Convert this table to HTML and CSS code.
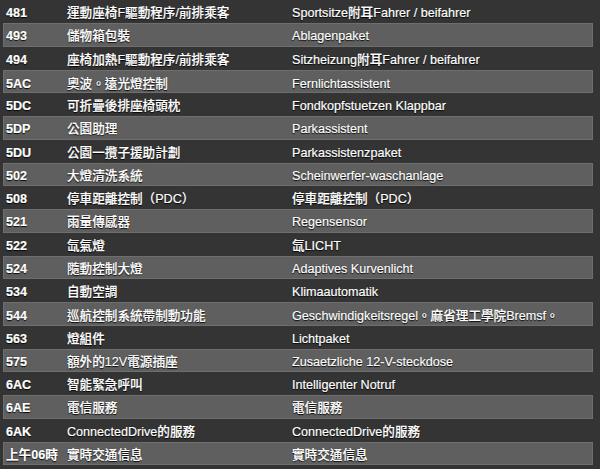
FILE: index.html
```html
<!DOCTYPE html>
<html lang="zh-Hant">
<head>
<meta charset="utf-8">
<link rel="stylesheet" href="styles.css">
</head>
<body>
<div class="list">
  <div class="row"><span class="code">481</span><span class="zh">運動座椅F驅動程序/前排乘客</span><span class="de">Sportsitze附耳Fahrer / beifahrer</span></div>
  <div class="row alt"><span class="code">493</span><span class="zh">儲物箱包裝</span><span class="de">Ablagenpaket</span></div>
  <div class="row"><span class="code">494</span><span class="zh">座椅加熱F驅動程序/前排乘客</span><span class="de">Sitzheizung附耳Fahrer / beifahrer</span></div>
  <div class="row alt"><span class="code">5AC</span><span class="zh">奧波<i class="p">。</i>遠光燈控制</span><span class="de">Fernlichtassistent</span></div>
  <div class="row"><span class="code">5DC</span><span class="zh">可折疊後排座椅頭枕</span><span class="de">Fondkopfstuetzen Klappbar</span></div>
  <div class="row alt"><span class="code">5DP</span><span class="zh">公園助理</span><span class="de">Parkassistent</span></div>
  <div class="row"><span class="code">5DU</span><span class="zh">公園一攬子援助計劃</span><span class="de">Parkassistenzpaket</span></div>
  <div class="row alt"><span class="code">502</span><span class="zh">大燈清洗系統</span><span class="de">Scheinwerfer-waschanlage</span></div>
  <div class="row"><span class="code">508</span><span class="zh">停車距離控制（PDC）</span><span class="de">停車距離控制（PDC）</span></div>
  <div class="row alt"><span class="code">521</span><span class="zh">雨量傳感器</span><span class="de">Regensensor</span></div>
  <div class="row"><span class="code">522</span><span class="zh">氙氣燈</span><span class="de">氙LICHT</span></div>
  <div class="row alt"><span class="code">524</span><span class="zh">隨動控制大燈</span><span class="de">Adaptives Kurvenlicht</span></div>
  <div class="row"><span class="code">534</span><span class="zh">自動空調</span><span class="de">Klimaautomatik</span></div>
  <div class="row alt"><span class="code">544</span><span class="zh">巡航控制系統帶制動功能</span><span class="de">Geschwindigkeitsregel<i class="p">。</i>麻省理工學院Bremsf<i class="p">。</i></span></div>
  <div class="row"><span class="code">563</span><span class="zh">燈組件</span><span class="de">Lichtpaket</span></div>
  <div class="row alt"><span class="code">575</span><span class="zh">額外的12V電源插座</span><span class="de">Zusaetzliche 12-V-steckdose</span></div>
  <div class="row"><span class="code">6AC</span><span class="zh">智能緊急呼叫</span><span class="de">Intelligenter Notruf</span></div>
  <div class="row alt"><span class="code">6AE</span><span class="zh">電信服務</span><span class="de">電信服務</span></div>
  <div class="row"><span class="code">6AK</span><span class="zh">ConnectedDrive的服務</span><span class="de">ConnectedDrive的服務</span></div>
  <div class="row alt"><span class="code">上午06時</span><span class="zh">實時交通信息</span><span class="de">實時交通信息</span></div>
</div>
</body>
</html>
```

FILE: styles.css
```css
html, body {
  margin: 0;
  padding: 0;
  background: #343434;
}
body {
  width: 600px;
  height: 469px;
  overflow: hidden;
  font-family: "Liberation Sans", Arial, "Noto Sans CJK TC", sans-serif;
  font-size: 12.6px;
  color: #ffffff;
}
.list {
  display: flex;
  flex-direction: column;
  padding: 0 7px 0 3px;
}
.row {
  display: grid;
  grid-template-columns: 61px 225px 1fr;
  grid-template-rows: 21px;
  align-items: baseline;
  height: 23.25px;
  line-height: 14px;
  box-sizing: border-box;
  padding-left: 2px;
  border: 1px solid transparent;
  text-shadow: 0 1px 1px rgba(0, 0, 0, 0.9), 0 0 1px rgba(0, 0, 0, 0.6);
  -webkit-text-stroke: 0.2px #ffffff;
  white-space: nowrap;
}
.row > span {
  padding-top: 5px;
}
.row.alt {
  background: #5f5f5f;
  border-color: #6e6e6e;
}
.code {
  font-weight: bold;
}
.zh, .de {
  font-weight: 500;
}
.p {
  font-style: normal;
  font-family: "Noto Sans CJK TC", sans-serif;
  line-height: 14px;
}
```
